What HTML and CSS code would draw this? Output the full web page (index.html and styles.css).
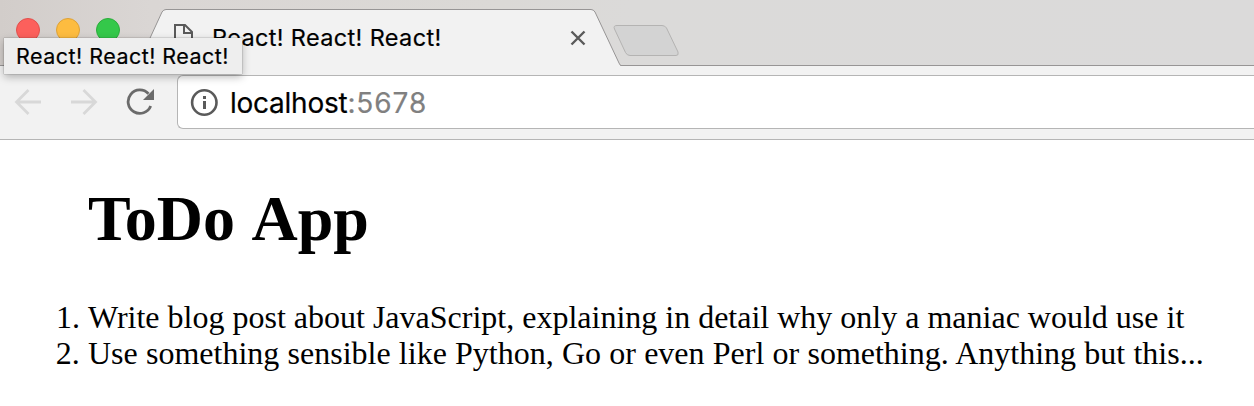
FILE: index.html
```html
<!DOCTYPE html>
<html lang="en">
<head>
<meta charset="utf-8">
<title>React! React! React!</title>
<link rel="stylesheet" href="styles.css">
</head>
<body>
<header class="tabstrip">
  <div class="lights">
    <span class="light close"></span>
    <span class="light minimize"></span>
    <span class="light zoom"></span>
  </div>
  <div class="tab">
    <svg class="tab-shape" width="493" height="66" viewBox="0 0 493 66">
      <path d="M0 66 L8 65.5 Q10 65 11 62 L34 12 Q35.500 9.500 38 9.500 H463 Q465.500 9.500 467 12 L491 63 Q492 65.500 493 66 Z" fill="#f2f2f2"/>
      <path d="M0 65.500 H8 Q10 65 11 62 L34 12 Q35.500 9.500 38 9.500 H463 Q465.500 9.500 467 12 L491 63 Q492 65.500 493 65.500" fill="none" stroke="#979595" stroke-width="1"/>
    </svg>
    <svg class="page-icon" width="22" height="28" viewBox="0 0 22 28" fill="none" stroke="#5a5a5a" stroke-width="2">
      <path d="M3 2 H13 L20 9 V26 H3 Z M12 2 V10 H20"/>
    </svg>
    <span class="tab-title">React! React! React!</span>
    <svg class="tab-close" width="16" height="16" viewBox="0 0 16 16" stroke="#5a5a5a" stroke-width="2.400">
      <path d="M1.500 1.500 L14.500 14.500 M14.500 1.500 L1.500 14.500"/>
    </svg>
  </div>
  <svg class="new-tab" width="67" height="33" viewBox="0 0 67 33">
    <path d="M4 1.500 H49 Q52 1.500 53.500 4 L65 28 Q66 31.500 63 31.500 H17 Q14 31.500 12.500 28.500 L1.500 5 Q0 1.500 4 1.500 Z" fill="#d3d3d3" stroke="#b4b3b2"/>
  </svg>
</header>
<nav class="toolbar">
  <svg class="arrow" width="28" height="28" viewBox="0 0 28 28" fill="none" stroke="#d8d8d8" stroke-width="2.800">
    <path d="M27 14 H3 M14.500 2 L2.500 14 L14.500 26"/>
  </svg>
  <svg class="arrow forward" width="28" height="28" viewBox="0 0 28 28" fill="none" stroke="#d8d8d8" stroke-width="2.800">
    <path d="M1 14 H25 M13.500 2 L25.500 14 L13.500 26"/>
  </svg>
  <svg class="reload" width="28" height="28" viewBox="0 0 28 28">
    <path d="M24.700 18 A11.700 11.700 0 1 1 22.500 5.800" fill="none" stroke="#6b6b6b" stroke-width="2.800"/>
    <path d="M28 1 V12 H17 Z" fill="#6b6b6b"/>
  </svg>
  <div class="omnibox">
    <svg width="28" height="28" viewBox="0 0 28 28">
      <circle cx="14.300" cy="14.500" r="12.200" fill="none" stroke="#5a5a5a" stroke-width="2.600"/>
      <path d="M13 8 H16 V11 H13 Z M13 13 H16 V21 H13 Z" fill="#5a5a5a"/>
    </svg>
    <span class="url"><span class="host">localhost</span><span class="port">:5678</span></span>
  </div>
</nav>
<main class="page">
  <h1 class="heading">ToDo App</h1>
  <ol class="todos">
    <li class="todo">Write blog post about JavaScript, explaining in detail why only a maniac would use it</li>
    <li class="todo second">Use something sensible like Python, Go or even Perl or something. Anything but this...</li>
  </ol>
</main>
<div class="tooltip">React! React! React!</div>
</body>
</html>
```
FILE: styles.css
```css
* { box-sizing: border-box; }
body {
  margin: 0;
  height: 406px;
  overflow: hidden;
  background: #fff;
  color: #000;
  font-family: Inter, "Liberation Sans", sans-serif;
}
svg { display: block; flex: none; }
.tabstrip {
  display: flex;
  height: 66px;
  border-bottom: 1px solid #979595;
  background: linear-gradient(90deg, #d2cdca 0, #dad6d4 150px, #dbd9d6 500px, #dbdad9 630px, #dbdada 100%);
}
.lights {
  display: flex;
  gap: 16px;
  width: 128px;
  padding: 18px 0 0 16px;
}
.light {
  flex: none;
  width: 24px;
  height: 24px;
  border: 1px solid;
  border-radius: 50%;
}
.close { background: #fc605c; border-color: #e2504c; }
.minimize { background: #fdbc40; border-color: #dea236; }
.zoom { background: #34c84a; border-color: #2bad3a; }
.tab {
  position: relative;
  display: flex;
  flex: none;
  width: 493px;
  height: 66px;
  padding-left: 44px;
}
.tab-shape { position: absolute; inset: 0; }
.page-icon { position: relative; margin-top: 23px; }
.tab-title {
  position: relative;
  flex: none;
  width: 230px;
  margin: 23px 0 0 18px;
  font-size: 23.5px;
  line-height: 30px;
  letter-spacing: 0.35px;
  -webkit-text-stroke: 0.2px;
  white-space: nowrap;
}
.tab-close { position: relative; margin: 30px 0 0 128px; }
.new-tab { margin: 24px 0 0 -8px; position: relative; }
.toolbar {
  display: flex;
  height: 74px;
  padding-left: 14px;
  background: #f2f2f2;
  border-bottom: 1px solid #b5b5b5;
}
.arrow { margin-top: 22px; }
.forward { margin-left: 28px; }
.reload { margin: 22px 0 0 28px; }
.omnibox {
  display: flex;
  flex: 1;
  align-items: center;
  height: 54px;
  margin: 9px 0 0 23px;
  padding-left: 12px;
  border: 1px solid #b5b5b5;
  border-right: 0;
  border-radius: 6px 0 0 6px;
  background: #fff;
}
.url {
  margin-left: 12px;
  padding-top: 1px;
  font-size: 28px;
  line-height: 34px;
  -webkit-text-stroke: 0.2px;
  white-space: nowrap;
}
.host { letter-spacing: -0.25px; }
.port { color: #808080; letter-spacing: 0.9px; }
.page {
  padding: 42px 0 0 88px;
  font-family: "Liberation Serif", "Times New Roman", serif;
}
.heading {
  margin: 0;
  font-size: 64px;
  line-height: 74px;
  word-spacing: 4px;
}
.todos {
  margin: 43px 0 0;
  padding: 0;
  font-size: 32px;
  line-height: 36px;
}
.todo { white-space: nowrap; }
.second { word-spacing: 0.22px; }
.tooltip {
  position: absolute;
  left: 4px;
  top: 38px;
  width: 238px;
  height: 36px;
  padding-left: 12px;
  background: #eee;
  box-shadow: 0 0 1px rgba(0, 0, 0, .5), 0 3px 8px rgba(0, 0, 0, .28);
  font-size: 21.5px;
  line-height: 36px;
  letter-spacing: 0.47px;
  -webkit-text-stroke: 0.2px;
  white-space: nowrap;
}
```
